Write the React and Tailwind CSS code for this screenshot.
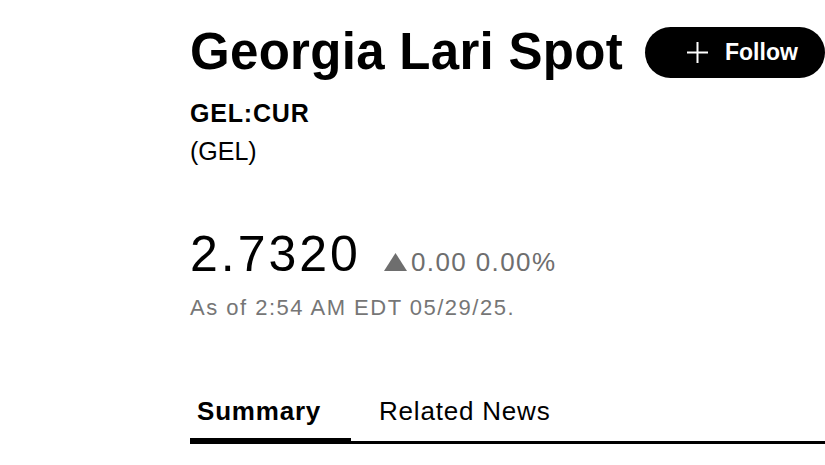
import React, { useState } from "react";

const tabs = ["Summary", "Related News"];

const PlusIcon = () => (
  <svg width="21" height="21" viewBox="0 0 21 21" fill="none" stroke="currentColor" strokeWidth="2">
    <path d="M10.5 0v21M0 10.5h21" />
  </svg>
);

const UpTriangle = () => (
  <svg width="23" height="18" viewBox="0 0 23 18" className="shrink-0">
    <path d="M11.5 0L23 18H0z" fill="#6e6e6e" />
  </svg>
);

const App = () => {
  const [activeTab, setActiveTab] = useState("Summary");

  return (
    <div className="min-h-[465px] w-[825px] overflow-hidden bg-white pl-[190px] pt-[22px] font-['Liberation_Sans',Arial,Helvetica,sans-serif] text-black">
      <div className="flex h-[60px] items-center">
        <h1 className="whitespace-nowrap text-[51px] font-bold leading-[60px] tracking-[0.3px]">Georgia Lari Spot</h1>
        <button
          type="button"
          className="ml-[22px] flex h-[51px] w-[180px] shrink-0 items-center rounded-full bg-black pl-[42px] text-white"
        >
          <PlusIcon />
          <span className="ml-[17px] text-[23px] font-bold leading-none">Follow</span>
        </button>
      </div>

      <p className="mt-[12px] text-[25px] font-bold leading-[38px] tracking-[0.8px]">GEL:CUR</p>
      <p className="text-[25px] leading-[38px]">(GEL)</p>

      <div className="mt-[56px] flex items-baseline">
        <span className="text-[50px] leading-[56px] tracking-[3px]">2.7320</span>
        <span className="ml-[23px] flex items-baseline gap-[4px] text-[26px] leading-[56px] tracking-[1.4px] text-[#6e6e6e]">
          <UpTriangle />
          0.00 0.00%
        </span>
      </div>
      <p className="mt-[3px] text-[22px] leading-[30px] tracking-[1.5px] text-[#767676]">
        As of 2:54 AM EDT 05/29/25.
      </p>

      <div className="mt-[72px] flex border-b-[3px] border-black">
        {tabs.map((tab) => {
          const isActive = tab === activeTab;
          return (
            <button
              key={tab}
              type="button"
              onClick={() => setActiveTab(tab)}
              className={`-mb-[3px] pb-[11px] text-left text-[26px] leading-[32px] tracking-[0.8px] ${
                isActive
                  ? "w-[161px] border-b-[6px] border-black pl-[7px] font-bold"
                  : "border-b-[6px] border-transparent pl-[28px] font-normal"
              }`}
            >
              {tab}
            </button>
          );
        })}
      </div>
    </div>
  );
};

export default App;
